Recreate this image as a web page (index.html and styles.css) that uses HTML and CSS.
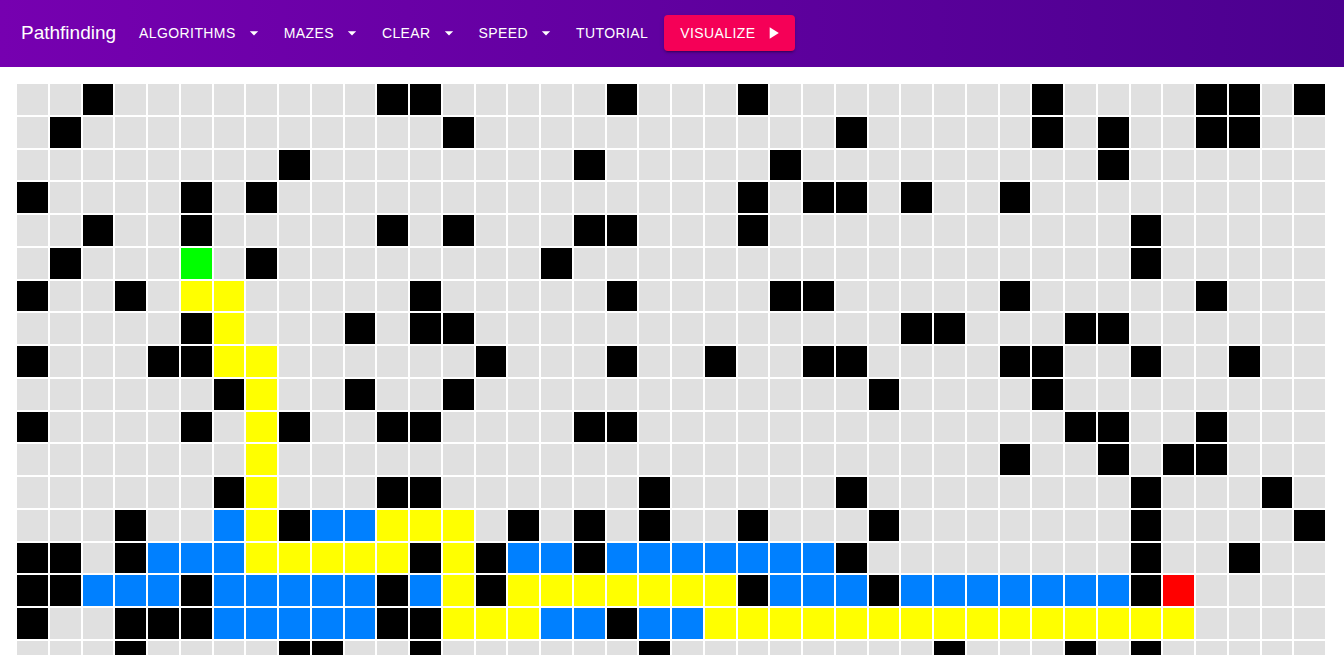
FILE: index.html
```html
<!DOCTYPE html>
<html lang="en">
<head>
<meta charset="utf-8">
<title>Pathfinding Visualizer</title>
<link rel="stylesheet" href="styles.css">
</head>
<body>
<header class="navbar">
  <div class="brand">Pathfinding</div>
  <nav class="menu">
    <button class="menu-item">Algorithms<svg class="caret" viewBox="0 0 24 24"><path d="M7 10l5 5 5-5z"/></svg></button>
    <button class="menu-item">Mazes<svg class="caret" viewBox="0 0 24 24"><path d="M7 10l5 5 5-5z"/></svg></button>
    <button class="menu-item">Clear<svg class="caret" viewBox="0 0 24 24"><path d="M7 10l5 5 5-5z"/></svg></button>
    <button class="menu-item">Speed<svg class="caret" viewBox="0 0 24 24"><path d="M7 10l5 5 5-5z"/></svg></button>
    <button class="menu-item plain">Tutorial</button>
    <button class="visualize">Visualize<svg class="play" viewBox="0 0 24 24"><path d="M8 5v14l11-7z"/></svg></button>
  </nav>
</header>
<main class="board" id="board"></main>
<script src="script.js"></script>
</body>
</html>
```

FILE: styles.css
```css
html, body {
  margin: 0;
  padding: 0;
  overflow: hidden;
  background: #ffffff;
}

body {
  font-family: "Liberation Sans", Arial, Helvetica, sans-serif;
}

.navbar {
  display: flex;
  align-items: center;
  height: 67px;
  padding-left: 21px;
  background: linear-gradient(90deg, #7600b0 0%, #4b008f 100%);
  color: #ffffff;
}

.brand {
  font-size: 19px;
  font-weight: 400;
  margin-right: 23px;
  margin-top: -1px;
}

.menu {
  display: flex;
  align-items: center;
  margin-top: -1px;
}

.menu-item {
  display: flex;
  align-items: center;
  background: none;
  border: none;
  padding: 0;
  margin: 0 20px 0 0;
  color: #ffffff;
  font-family: inherit;
  font-size: 14px;
  font-weight: 400;
  letter-spacing: 0.4px;
  text-transform: uppercase;
  cursor: pointer;
}

.menu-item.plain {
  margin-right: 16px;
}

.caret {
  width: 20px;
  height: 20px;
  margin-left: 8px;
  fill: #ffffff;
}

.visualize {
  display: flex;
  align-items: center;
  height: 36px;
  padding: 0 16px;
  border: none;
  border-radius: 4px;
  background: #f50057;
  color: #ffffff;
  font-family: inherit;
  font-size: 14px;
  font-weight: 400;
  letter-spacing: 0.4px;
  text-transform: uppercase;
  box-shadow: 0 3px 1px -2px rgba(0, 0, 0, 0.2), 0 2px 2px 0 rgba(0, 0, 0, 0.14), 0 1px 5px 0 rgba(0, 0, 0, 0.12);
  cursor: pointer;
}

.play {
  width: 20px;
  height: 20px;
  margin-left: 8px;
  margin-right: -4px;
  fill: #ffffff;
}

.board {
  display: flex;
  flex-direction: column;
  gap: 2px;
  padding: 17px 0 0 17px;
}

.row {
  display: flex;
  gap: 2px;
}

.cell {
  width: 30.75px;
  height: 30.75px;
  flex: none;
  background: #e0e0e0;
}

.cell.wall {
  background: #000000;
}

.cell.path {
  background: #ffff00;
}

.cell.visited {
  background: #0080ff;
}

.cell.start {
  background: #00ff00;
}

.cell.end {
  background: #ff0000;
}
```

FILE: script.js
```js
function range(a, b) {
  var out = [];
  for (var i = a; i <= b; i++) out.push(i);
  return out;
}

var COLS = 40;
var rows = [
  { wall: [2, 11, 12, 18, 22, 31, 36, 37, 39] },
  { wall: [1, 13, 25, 31, 33, 36, 37] },
  { wall: [8, 17, 23, 33] },
  { wall: [0, 5, 7, 22, 24, 25, 27, 30] },
  { wall: [2, 5, 11, 13, 17, 18, 22, 34] },
  { wall: [1, 7, 16, 34], start: [5] },
  { wall: [0, 3, 12, 18, 23, 24, 30, 36], path: [5, 6] },
  { wall: [5, 10, 12, 13, 27, 28, 32, 33], path: [6] },
  { wall: [0, 4, 5, 14, 18, 21, 24, 25, 30, 31, 34, 37], path: [6, 7] },
  { wall: [6, 10, 13, 26, 31], path: [7] },
  { wall: [0, 5, 8, 11, 12, 17, 18, 32, 33, 36], path: [7] },
  { wall: [30, 33, 35, 36], path: [7] },
  { wall: [6, 11, 12, 19, 25, 34, 38], path: [7] },
  { wall: [3, 8, 15, 17, 19, 22, 26, 34, 39], path: [7, 11, 12, 13], visited: [6, 9, 10] },
  { wall: [0, 1, 3, 12, 14, 17, 25, 34, 37], path: range(7, 11).concat([13]), visited: [4, 5, 6, 15, 16].concat(range(18, 24)) },
  { wall: [0, 1, 5, 11, 14, 22, 26, 34], path: [13].concat(range(15, 21)), visited: range(2, 4).concat(range(6, 10), [12], range(23, 25), range(27, 33)), end: [35] },
  { wall: [0, 3, 4, 5, 11, 12, 18], path: range(13, 15).concat(range(21, 35)), visited: range(6, 10).concat([16, 17, 19, 20]) },
  { wall: [3, 8, 9, 12, 19, 28, 32, 34] },
  { wall: [] },
  { wall: [] }
];

var board = document.getElementById('board');
rows.forEach(function (spec) {
  var row = document.createElement('div');
  row.className = 'row';
  for (var c = 0; c < COLS; c++) {
    var cell = document.createElement('div');
    cell.className = 'cell';
    ['wall', 'path', 'visited', 'start', 'end'].forEach(function (kind) {
      if (spec[kind] && spec[kind].indexOf(c) !== -1) cell.classList.add(kind);
    });
    row.appendChild(cell);
  }
  board.appendChild(row);
});
```
